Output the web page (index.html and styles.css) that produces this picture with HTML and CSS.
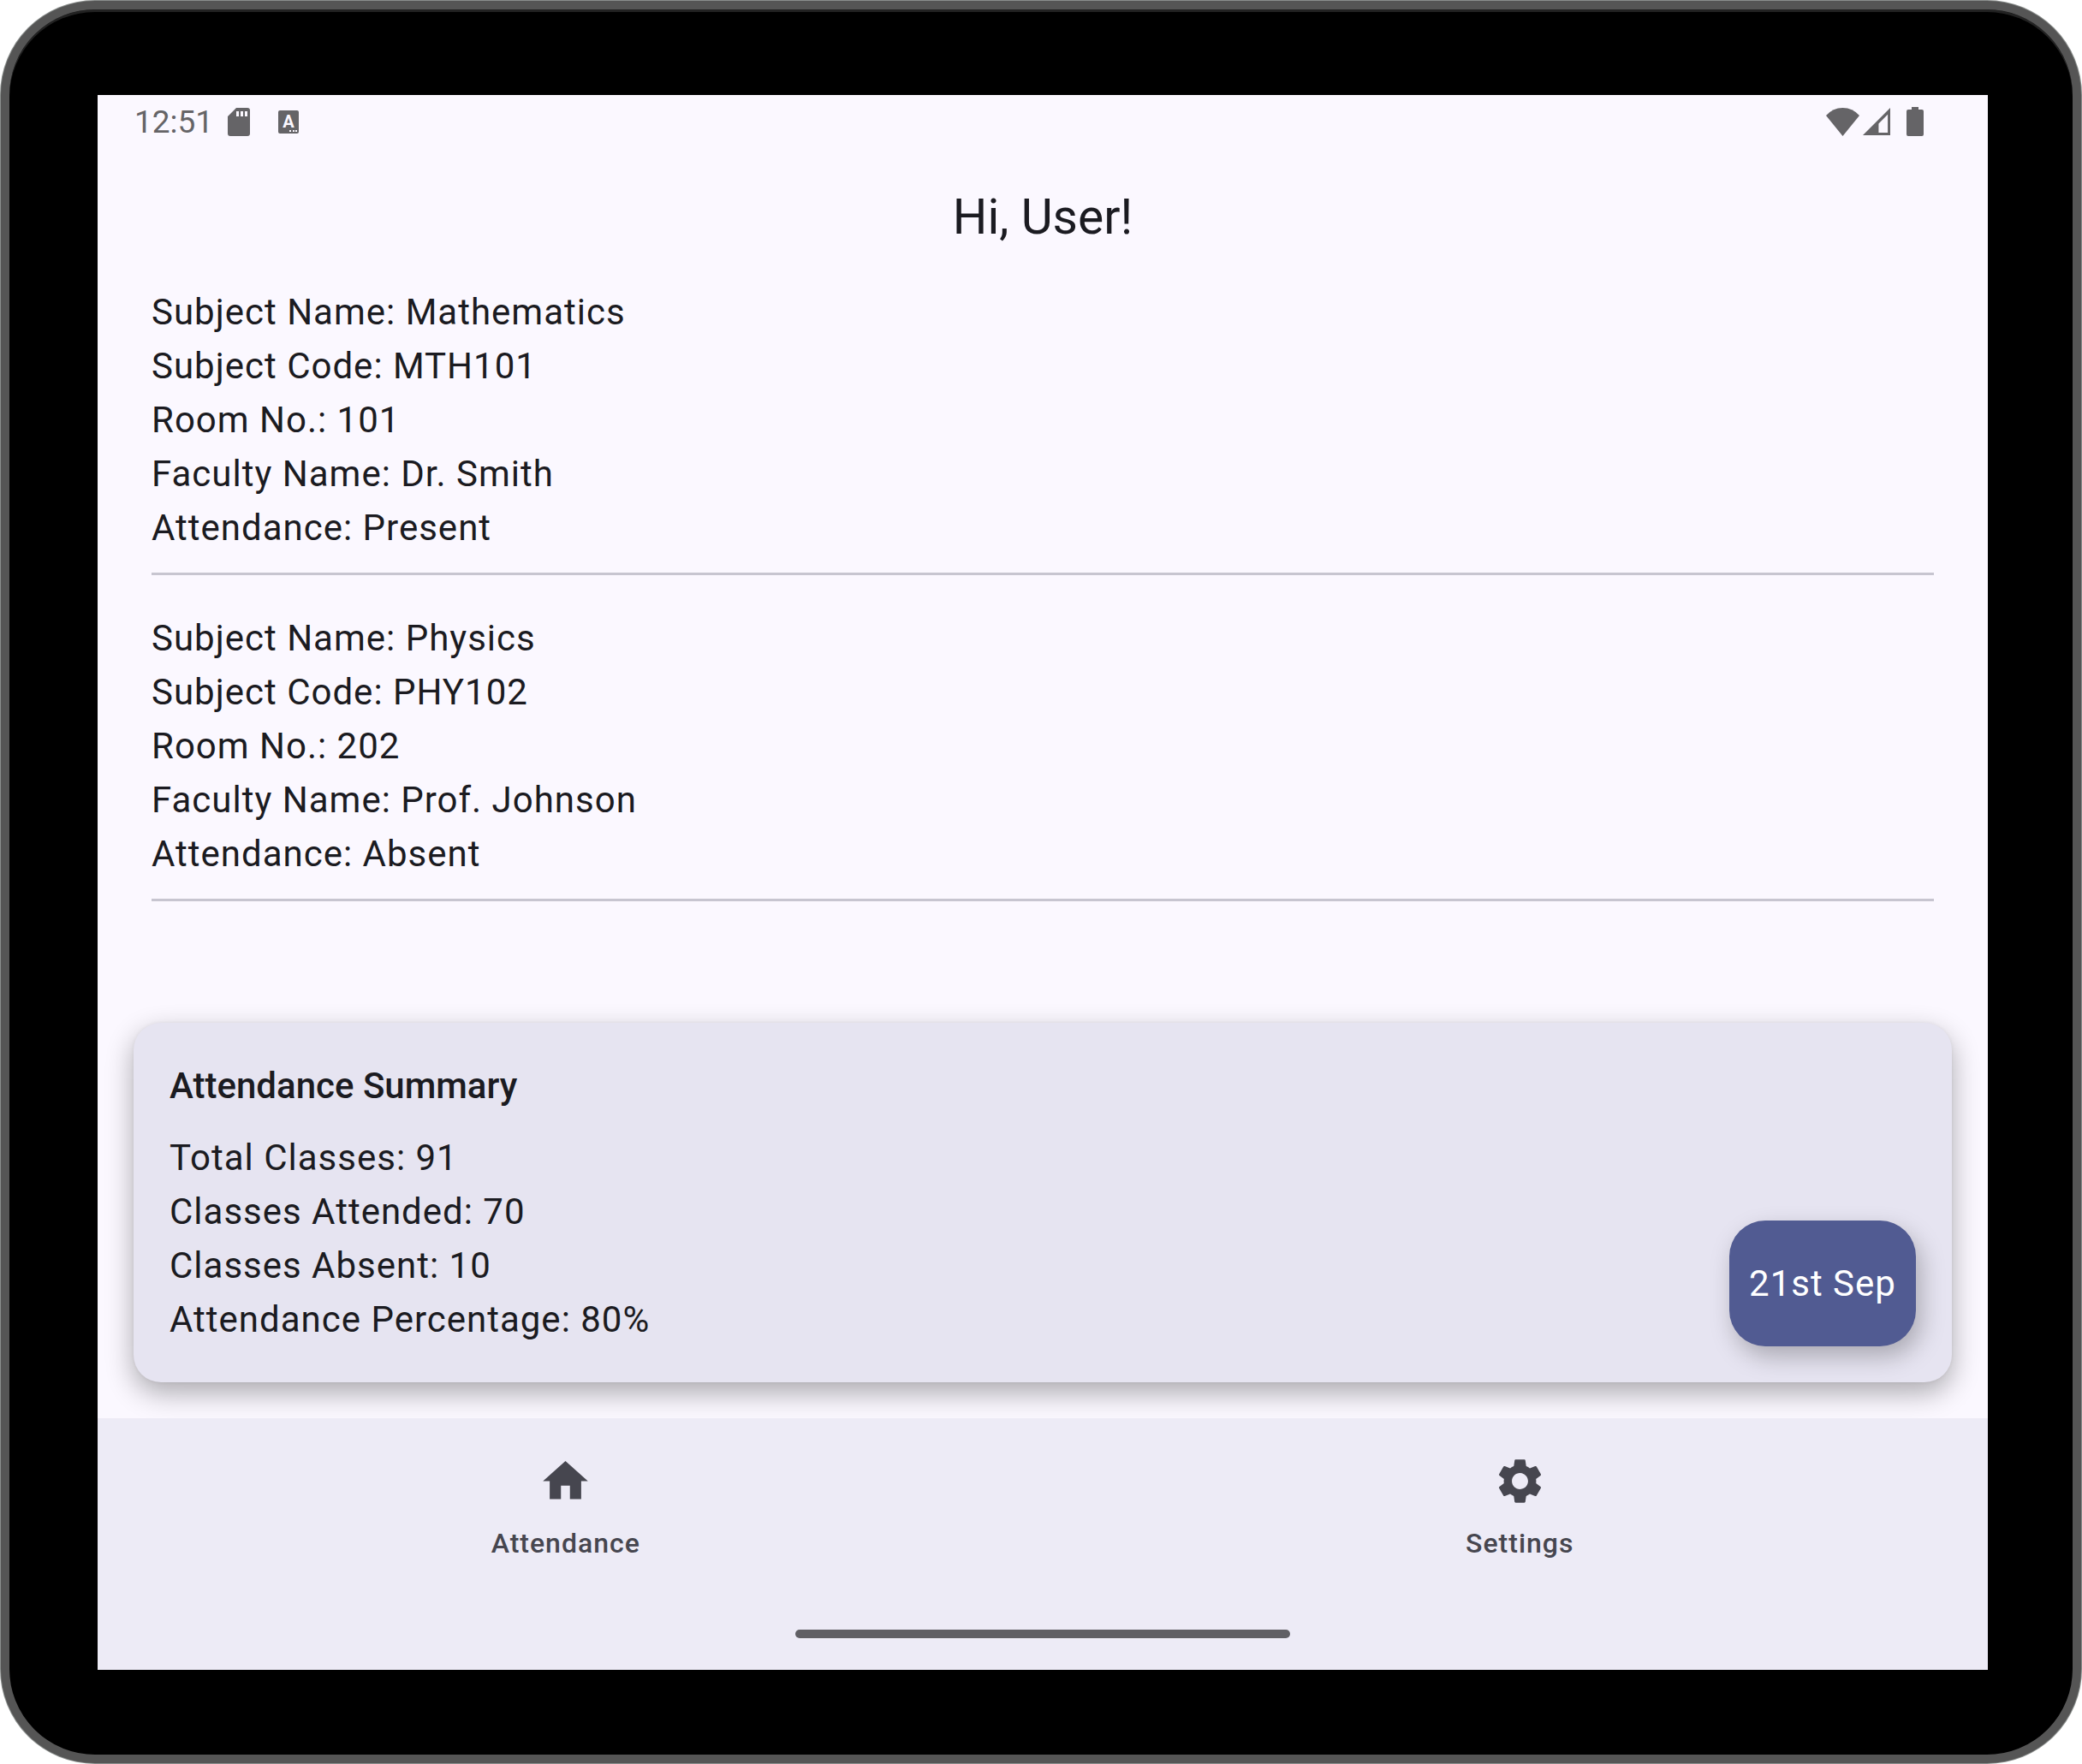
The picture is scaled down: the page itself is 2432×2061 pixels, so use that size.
FILE: index.html
```html
<!DOCTYPE html>
<html lang="en">
<head>
  <meta charset="utf-8">
  <meta name="viewport" content="width=device-width, initial-scale=1">
  <title>Attendance</title>
  <link rel="stylesheet" href="styles.css">
</head>
<body>
  <div class="device">
    <div class="screen">
      <div class="status-bar">
        <div class="status-left">
          <time class="clock">12:51</time>
          <svg class="icon-sd" viewBox="0 0 26 33" aria-hidden="true">
            <path fill-rule="evenodd" d="M10 0H23Q26 0 26 3V30Q26 33 23 33H3Q0 33 0 30V10ZM10 4V10H13V4ZM15 4V10H18V4ZM20 4V10H23V4Z"/>
          </svg>
          <svg class="icon-input" viewBox="0 0 24 27" aria-hidden="true">
            <rect width="24" height="27" rx="2"/>
            <text class="icon-letter" x="12" y="20" text-anchor="middle">A</text>
            <path class="icon-dots" d="M13 23h2v2h-2zM17 23h2v2h-2zM20 23h2v2h-2z"/>
          </svg>
        </div>
        <div class="status-right">
          <svg class="icon-wifi" viewBox="0 0 39 33" aria-hidden="true">
            <path d="M0 9Q8 0 19.500 0Q31 0 39 9L19.500 33Z"/>
          </svg>
          <svg class="icon-signal" viewBox="0 0 33 33" aria-hidden="true">
            <path fill-rule="evenodd" d="M33 0V33H0ZM30 8L19 19V30H30Z"/>
          </svg>
          <svg class="icon-battery" viewBox="0 0 20 34" aria-hidden="true">
            <path d="M6 0H14V3H18Q20 3 20 5V32Q20 34 18 34H2Q0 34 0 32V5Q0 3 2 3H6Z"/>
          </svg>
        </div>
      </div>

      <header class="app-bar">
        <h1 class="app-title">Hi, User!</h1>
      </header>

      <main class="content">
        <ul class="subjects">
          <li class="subject">
            <p>Subject Name: Mathematics</p>
            <p>Subject Code: MTH101</p>
            <p>Room No.: 101</p>
            <p>Faculty Name: Dr. Smith</p>
            <p>Attendance: Present</p>
          </li>
          <li class="subject">
            <p>Subject Name: Physics</p>
            <p>Subject Code: PHY102</p>
            <p>Room No.: 202</p>
            <p>Faculty Name: Prof. Johnson</p>
            <p>Attendance: Absent</p>
          </li>
        </ul>

        <section class="summary">
          <div class="summary-text">
            <h2 class="summary-title">Attendance Summary</h2>
            <p>Total Classes: 91</p>
            <p>Classes Attended: 70</p>
            <p>Classes Absent: 10</p>
            <p>Attendance Percentage: 80%</p>
          </div>
          <button class="date-button" type="button">21st Sep</button>
        </section>
      </main>

      <footer class="bottom">
        <nav class="tabs">
          <button class="tab" type="button">
            <svg class="tab-icon" viewBox="0 0 24 24" aria-hidden="true">
              <path d="M10 20v-6h4v6h5v-8h3L12 3 2 12h3v8z"/>
            </svg>
            <span>Attendance</span>
          </button>
          <button class="tab" type="button">
            <svg class="tab-icon" viewBox="0 0 24 24" aria-hidden="true">
              <path d="M19.140 12.940c.04-.3.06-.61.06-.94 0-.32-.02-.64-.07-.94l2.030-1.580c.18-.14.23-.41.12-.61l-1.920-3.320c-.12-.22-.37-.29-.59-.22l-2.390.96c-.5-.38-1.030-.7-1.620-.94l-.36-2.540c-.04-.24-.24-.41-.48-.41h-3.840c-.24 0-.43.17-.47.41l-.36 2.540c-.59.24-1.130.57-1.620.94l-2.390-.96c-.22-.08-.47 0-.59.22L2.740 8.870c-.12.21-.08.47.12.61l2.030 1.580c-.05.3-.09.63-.09.94s.02.64.07.94l-2.030 1.580c-.18.14-.23.41-.12.61l1.920 3.320c.12.22.37.29.59.22l2.390-.96c.5.38 1.030.7 1.620.94l.36 2.540c.05.24.24.41.48.41h3.840c.24 0 .44-.17.47-.41l.36-2.540c.59-.24 1.130-.56 1.620-.94l2.390.96c.22.08.47 0 .59-.22l1.920-3.320c.12-.22.07-.47-.12-.61l-2.010-1.580zM12 15.600c-1.980 0-3.600-1.620-3.600-3.600s1.620-3.600 3.600-3.600 3.600 1.620 3.600 3.600-1.620 3.600-3.600 3.600z"/>
            </svg>
            <span>Settings</span>
          </button>
        </nav>
        <div class="gesture-handle"></div>
      </footer>
    </div>
  </div>
</body>
</html>
```

FILE: styles.css
```css
* {
  box-sizing: border-box;
}

body {
  margin: 0;
  padding: 1px;
  min-height: 100vh;
  display: flex;
  background: #fff;
  color: #1b1b21;
  font-family: Roboto, "Liberation Sans", sans-serif;
  font-size: 42px;
  line-height: 63px;
  letter-spacing: 1px;
}

h1,
h2,
p,
ul {
  margin: 0;
  padding: 0;
}

button {
  border: 0;
  font: inherit;
  letter-spacing: inherit;
  cursor: pointer;
}

svg {
  display: block;
  fill: currentColor;
}

/* Device bezel */
.device {
  flex: 1;
  display: flex;
  padding: 100px 99px 99px 103px;
  border: 10px solid #555;
  border-radius: 110px;
  background: #000;
  box-shadow: inset 0 3px 0 #222, 0 0 0 1px #8a8e8c;
}

.screen {
  flex: 1;
  display: flex;
  flex-direction: column;
  overflow: hidden;
  background: #fbf8ff;
}

/* Status bar */
.status-bar {
  height: 62px;
  padding: 0 75px 0 43px;
  display: flex;
  align-items: center;
  justify-content: space-between;
  color: #656467;
}

.status-left,
.status-right {
  display: flex;
  align-items: center;
}

.clock {
  margin-right: 17px;
  font-size: 37px;
  letter-spacing: 0;
}

.icon-sd {
  width: 26px;
  height: 33px;
  margin-right: 33px;
}

.icon-input {
  width: 24px;
  height: 27px;
}

.icon-letter {
  fill: #fbf8ff;
  font-size: 20px;
  font-weight: 700;
  letter-spacing: 0;
}

.icon-dots {
  fill: #fbf8ff;
}

.icon-wifi {
  width: 39px;
  height: 33px;
  margin-right: 4px;
}

.icon-signal {
  width: 32px;
  height: 32px;
  margin-right: 19px;
}

.icon-battery {
  width: 20px;
  height: 34px;
}

/* Top bar */
.app-bar {
  height: 160px;
  display: flex;
  align-items: center;
  justify-content: center;
}

.app-title {
  font-size: 57px;
  font-weight: 400;
  letter-spacing: 0;
}

/* Subject list and summary card */
.content {
  flex: 1;
  display: flex;
  flex-direction: column;
  padding: 0 42px 42px;
}

.subjects {
  display: flex;
  flex-direction: column;
  gap: 42px;
  padding: 0 21px 42px;
  list-style: none;
}

.subject {
  padding-bottom: 21px;
  border-bottom: 3px solid #c7c5d0;
}

.summary {
  margin-top: auto;
  padding: 42px;
  display: flex;
  align-items: flex-end;
  justify-content: space-between;
  border-radius: 32px;
  background: #e6e4f1;
  box-shadow: 0 12px 32px rgba(0, 0, 0, 0.32), 0 0 4px rgba(0, 0, 0, 0.06);
}

.summary-title {
  margin-bottom: 21px;
  font-size: 42px;
  font-weight: 500;
  letter-spacing: 0;
}

.date-button {
  min-width: 218px;
  height: 147px;
  padding: 0 21px;
  border-radius: 42px;
  background: #515b92;
  color: #fff;
  box-shadow: 6px 12px 28px rgba(0, 0, 0, 0.26);
}

/* Bottom navigation */
.bottom {
  position: relative;
  display: flex;
  flex-direction: column;
  align-items: center;
  padding-bottom: 37px;
  background: #edebf6;
}

.tabs {
  width: 100%;
  display: flex;
  gap: 21px;
  padding: 42px 0 80px;
}

.tab {
  flex: 1;
  display: flex;
  flex-direction: column;
  align-items: center;
  gap: 20px;
  padding: 0;
  background: none;
  color: #46464f;
  font-size: 32px;
  font-weight: 500;
  line-height: 42px;
}

.tab-icon {
  width: 63px;
  height: 63px;
}

.gesture-handle {
  width: 578px;
  height: 10px;
  border-radius: 5px;
  background: #605f64;
}
```
